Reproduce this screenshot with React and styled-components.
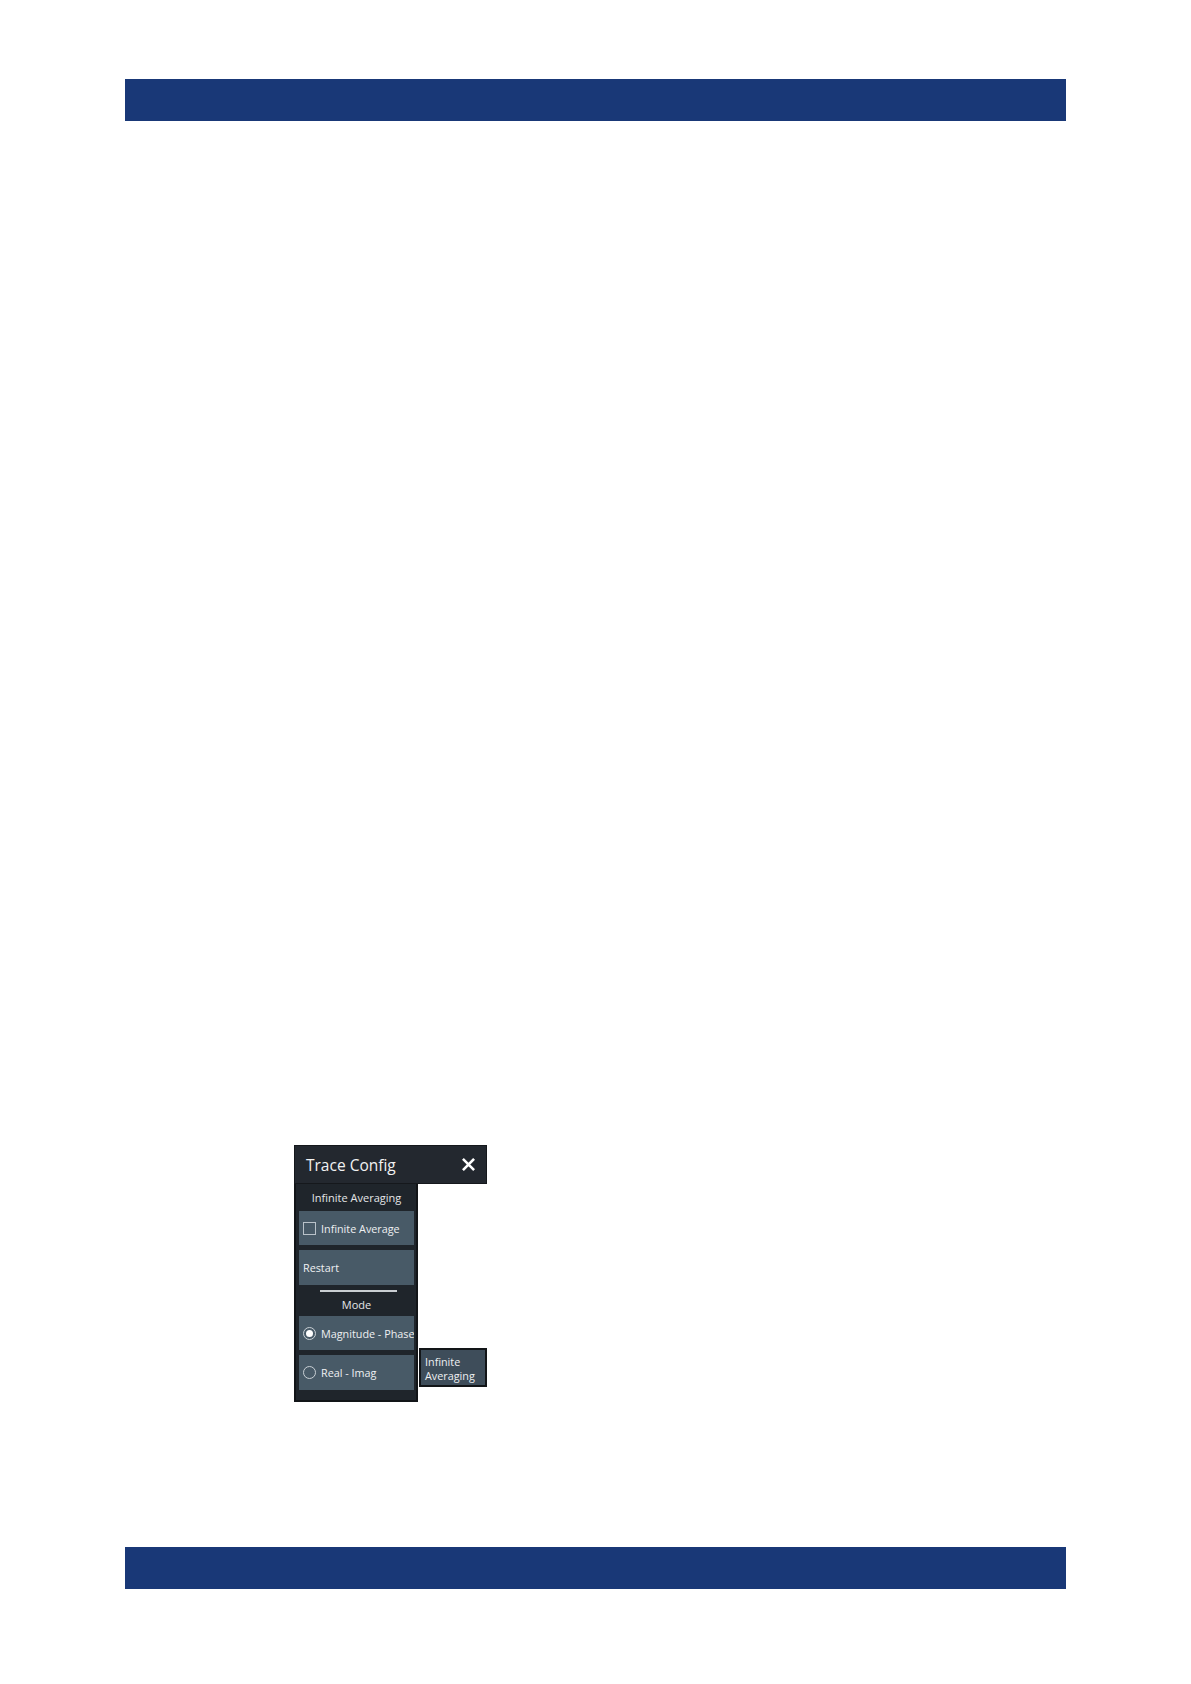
import React from "react";
import styled, { createGlobalStyle } from "styled-components";

const Global = createGlobalStyle`
  html, body { margin: 0; padding: 0; background: #ffffff; }
  body { font-family: "Open Sans", "Noto Sans", "Liberation Sans", sans-serif; }
`;

const Page = styled.div`
  width: 1191px;
  height: 1684px;
  display: flex;
  flex-direction: column;
  background: #fff;
`;

const Band = styled.div`
  margin: ${(p) => p.$top}px 0 0 125px;
  width: 941px;
  height: 42px;
  background: #193877;
`;

const Content = styled.div`
  margin-top: 1024px;
  padding-left: 294px;
  height: 256px;
`;

const Dialog = styled.div`
  position: relative;
  width: 193px;
  display: flex;
  flex-direction: column;
`;

const TitleBar = styled.div`
  height: 39px;
  box-sizing: border-box;
  background: #23282f;
  border: 1px solid #15181c;
  display: flex;
  align-items: center;
  justify-content: space-between;
  padding: 0 11px 0 11px;
  color: #f2f2f2;
  font-size: 15.5px;
`;

const CloseIcon = styled.svg`
  width: 13px;
  height: 13px;
  display: block;
`;

const Panel = styled.div`
  width: 124px;
  box-sizing: border-box;
  background: #1f252b;
  border: 2px solid #121518;
  border-top: none;
  padding: 0 2px 10px 3px;
  display: flex;
  flex-direction: column;
`;

const SectionLabel = styled.div`
  height: ${(p) => p.$h}px;
  display: flex;
  align-items: center;
  justify-content: center;
  color: #e4e6e8;
  font-size: 11px;
`;

const Button = styled.div`
  height: ${(p) => p.$h || 34}px;
  margin-top: ${(p) => p.$mt || 0}px;
  background: #485a67;
  display: flex;
  align-items: center;
  gap: 5px;
  padding-left: 4px;
  color: #eef0f2;
  font-size: 10.8px;
  white-space: nowrap;
  overflow: hidden;
`;

const Check = styled.span`
  width: 11px;
  height: 11px;
  border: 1px solid #b9c2c9;
  flex: none;
`;

const Radio = styled.span`
  width: 11px;
  height: 11px;
  border-radius: 50%;
  border: 1px solid #c9d0d5;
  flex: none;
  display: flex;
  align-items: center;
  justify-content: center;
  &::after {
    content: "";
    width: 7px;
    height: 7px;
    border-radius: 50%;
    background: ${(p) => (p.$on ? "#ffffff" : "transparent")};
  }
`;

const Separator = styled.div`
  height: 2px;
  margin: 5px 17px 0 21px;
  background: #c9ced2;
`;

const Tooltip = styled.div`
  position: absolute;
  left: 125px;
  top: 203px;
  width: 68px;
  height: 39px;
  box-sizing: border-box;
  background: #3e4d5a;
  border: 2px solid #121518;
  padding: 5px 0 0 4px;
  color: #eef0f2;
  font-size: 10.8px;
  line-height: 13.5px;
`;

export default function App() {
  return (
    <Page>
      <Global />
      <Band $top={79} />
      <Content>
        <Dialog>
          <TitleBar>
            <span>Trace Config</span>
            <CloseIcon viewBox="0 0 14 14">
              <path d="M2 2 L12 12 M12 2 L2 12" stroke="#ffffff" strokeWidth="2.8" strokeLinecap="square" />
            </CloseIcon>
          </TitleBar>
          <Panel>
            <SectionLabel $h={27}>Infinite Averaging</SectionLabel>
            <Button $h={34}>
              <Check />
              Infinite Average
            </Button>
            <Button $h={35} $mt={5}>Restart</Button>
            <Separator />
            <SectionLabel $h={24}>Mode</SectionLabel>
            <Button $h={34}>
              <Radio $on />
              Magnitude - Phase
            </Button>
            <Button $h={35} $mt={5}>
              <Radio />
              Real - Imag
            </Button>
          </Panel>
          <Tooltip>
            Infinite
            <br />
            Averaging
          </Tooltip>
        </Dialog>
      </Content>
      <Band $top={146} />
    </Page>
  );
}
